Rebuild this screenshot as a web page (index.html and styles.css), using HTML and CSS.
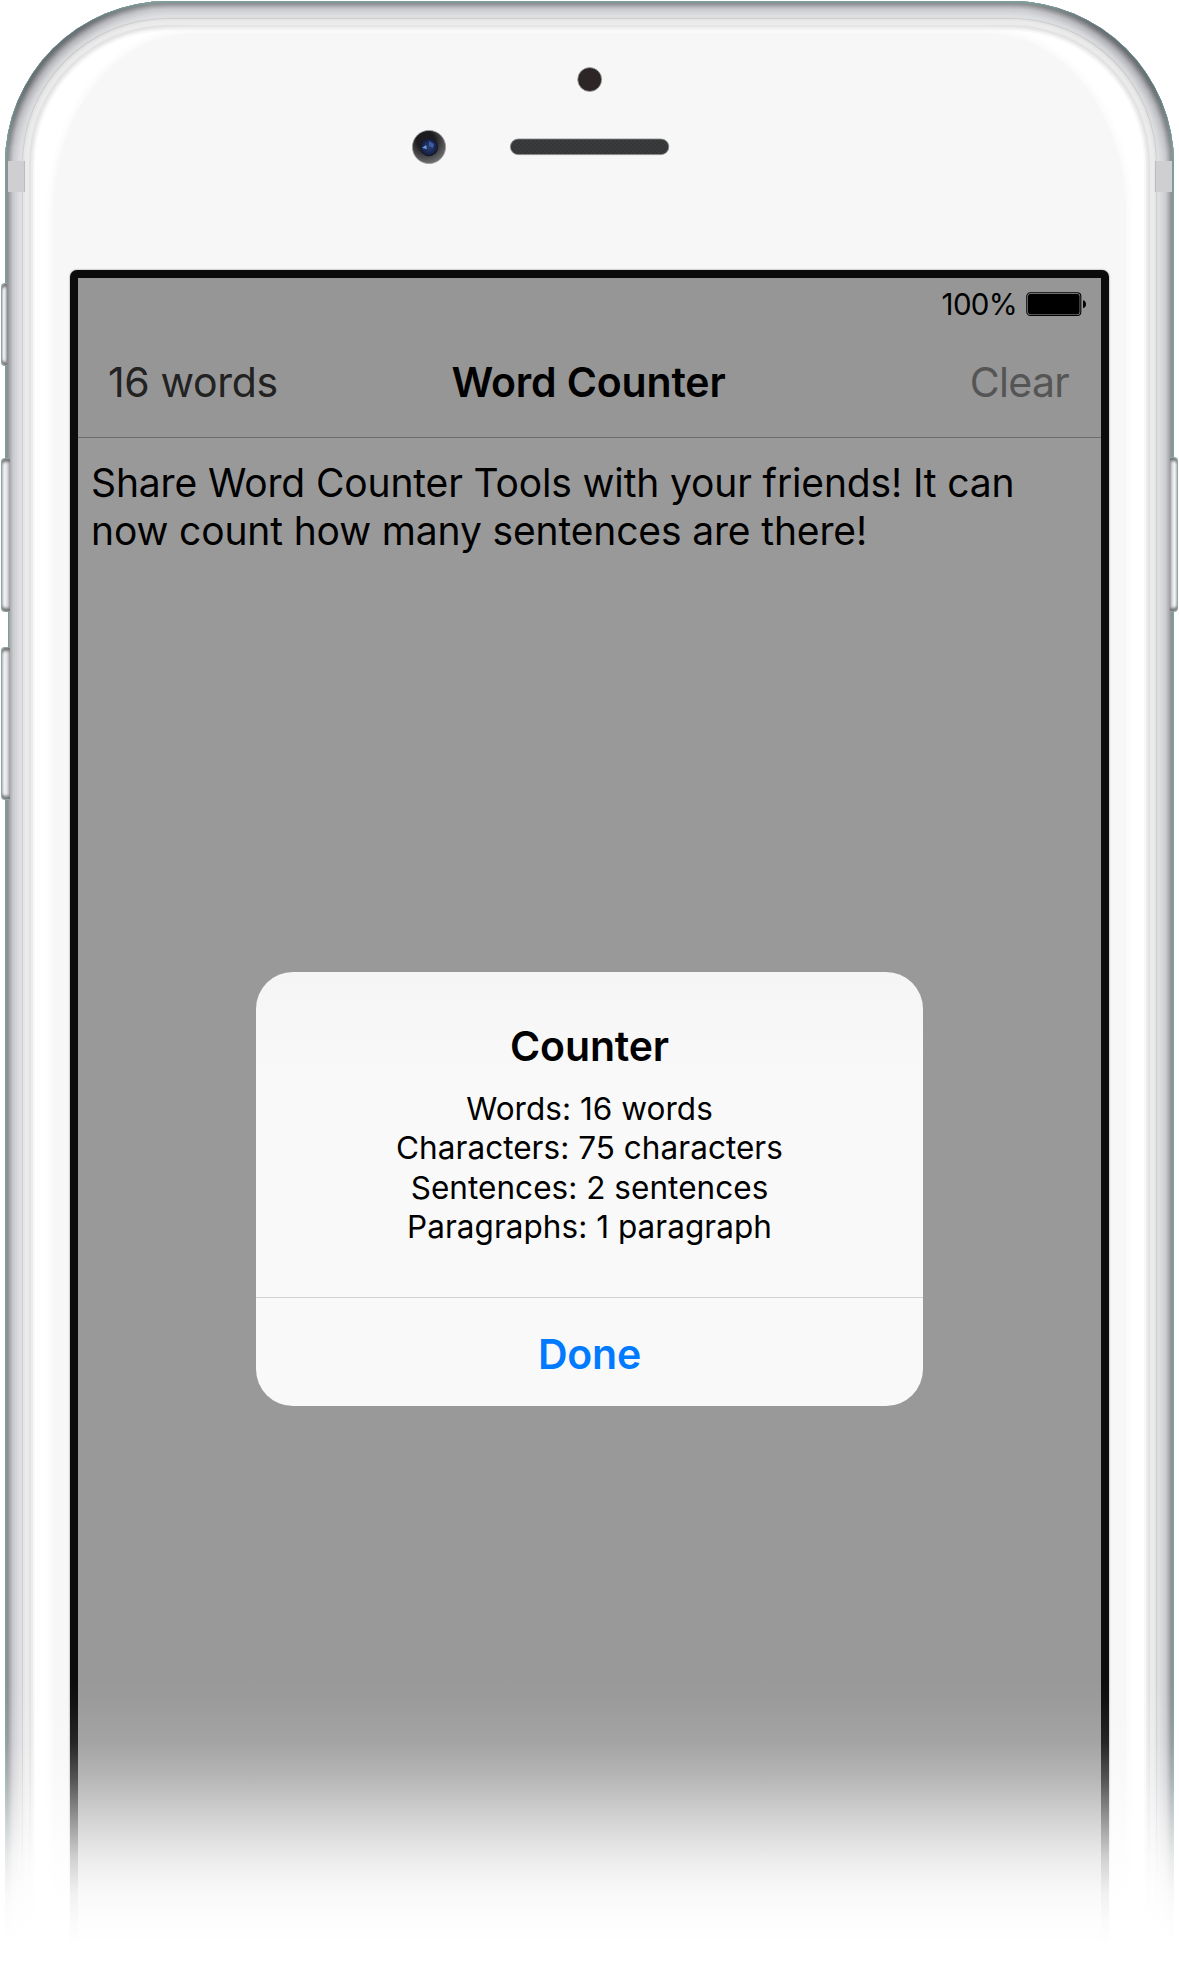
FILE: index.html
```html
<!DOCTYPE html>
<html lang="en">
<head>
<meta charset="utf-8">
<title>Word Counter</title>
<link rel="stylesheet" href="styles.css">
</head>
<body>
<main class="stage">
  <div class="phone">
    <i class="glass"></i>
    <i class="band band-left"></i>
    <i class="band band-right"></i>
    <svg class="sensors" viewBox="0 0 300 120" width="300" height="120" aria-hidden="true">
      <defs>
        <radialGradient id="ring" cx=".4" cy=".3" r=".75"><stop offset=".35" stop-color="#1c1c1e"/><stop offset="1" stop-color="#77787a"/></radialGradient>
        <radialGradient id="lens"><stop offset="0" stop-color="#27406f"/><stop offset=".6" stop-color="#1b2a59"/><stop offset="1" stop-color="#151722"/></radialGradient>
        <pattern id="mesh" width="4" height="4" patternUnits="userSpaceOnUse"><rect width="4" height="4" fill="#3a3b3d"/><circle cx="1" cy="1" r=".7" fill="#2b2b2d"/><circle cx="3" cy="3" r=".7" fill="#2b2b2d"/></pattern>
      </defs>
      <circle cx="199.7" cy="29.5" r="12" fill="#2d2627" stroke="#aaa" stroke-width=".8"/>
      <circle cx="39" cy="97" r="16.6" fill="url(#ring)" stroke="#999" stroke-width=".8"/>
      <circle cx="39" cy="97" r="9.2" fill="url(#lens)"/>
      <path d="M32 98l4-3 1 4z" fill="#6b9be0"/>
      <path d="M39 91l5 3-1 4-4-2z" fill="#3d5ca5"/>
      <rect x="120.4" y="89" width="158.4" height="15.6" rx="7.8" fill="url(#mesh)" stroke="#88898a" stroke-width=".8"/>
    </svg>
    <section class="screen">
      <div class="status">
        <span class="percent">100%</span>
        <svg width="61" height="25" viewBox="0 0 61 25" aria-hidden="true"><rect x=".8" y=".8" width="54" height="22.6" rx="3.5" fill="none" stroke="#000" stroke-width="1.1"/><rect x="2" y="2" width="51.6" height="20.2" rx="2.2"/><path d="M57 8.2c2.2.6 3 2.2 3 4s-.8 3.400-3 4z"/></svg>
      </div>
      <header class="nav">
        <span class="count">16 words</span>
        <h1 class="title">Word Counter</h1>
        <span class="clear">Clear</span>
      </header>
      <p class="text">Share Word Counter Tools with your friends! It can<br>now count how many sentences are there!</p>
      <section class="alert">
        <div class="alert-body">
          <h2 class="alert-title">Counter</h2>
          <p class="stats">Words: 16 words<br>Characters: 75 characters<br>Sentences: 2 sentences<br>Paragraphs: 1 paragraph</p>
        </div>
        <div class="done">Done</div>
      </section>
    </section>
  </div>
  <i class="notch"></i>
  <i class="key key-mute"></i>
  <i class="key key-up"></i>
  <i class="key key-down"></i>
  <i class="key key-power"></i>
  <div class="fade"></div>
</main>
</body>
</html>
```
FILE: styles.css
```css
* { box-sizing: border-box; }

body {
  margin: 0;
  background: #fff;
  font-family: Inter, "Liberation Sans", sans-serif;
  color: #000;
}

h1, h2, p { margin: 0; font-weight: 400; }

.stage {
  position: relative;
  width: 1179px;
  height: 1966px;
  padding: 1px 5px 0;
  overflow: hidden;
}

.phone {
  position: relative;
  height: 2200px;
  padding: 49px 65px 0;
  border-radius: 163px;
  background: #fff;
  box-shadow:
    inset 0 0 0 1.5px #7c9f9e,
    inset 0 0 0 3px #8b9294,
    inset 0 0 0 4px #97999b,
    inset 0 0 0 5px #a3a4a7,
    inset 0 0 0 6px #aeb0b3,
    inset 0 0 0 7px #b9babe,
    inset 0 0 0 8px #c3c4c8,
    inset 0 0 0 10px #cccdd1,
    inset 0 0 0 12px #d3d4d7,
    inset 0 0 0 14px #d9dadd,
    inset 0 0 0 17px #dedfe1,
    inset 0 0 0 18px #cfcfd0,
    inset 0 0 0 20px #e6e6e7,
    inset 0 0 0 24px #ebebeb,
    inset 0 0 0 26px #e2e2e2,
    inset 0 0 0 28px #ececec,
    inset 0 0 0 30px #f8f8f8;
}

/* Deeper shading on the curved metal of the two top corners */
.phone::before {
  content: "";
  position: absolute;
  inset: 0;
  border-radius: inherit;
  box-shadow: inset 0 0 16px 4px rgba(40, 40, 48, .5);
  -webkit-mask:
    radial-gradient(circle at 45px 50px, #000 40px, transparent 110px),
    radial-gradient(circle at calc(100% - 45px) 50px, #000 40px, transparent 110px);
  mask:
    radial-gradient(circle at 45px 50px, #000 40px, transparent 110px),
    radial-gradient(circle at calc(100% - 45px) 50px, #000 40px, transparent 110px);
}

.glass {
  position: absolute;
  inset: 32px 48px 0 48px;
  border-radius: 140px 140px 0 0 / 180px 180px 0 0;
  background: #f7f7f7;
  box-shadow: 0 0 8px 2px #f7f7f7;
}

.band {
  position: absolute;
  top: 160px;
  width: 17px;
  height: 31px;
  background: #cfcfd2;
}
.band-left { left: 3px; border-right: 1px solid #bbb; }
.band-right { right: 2px; border-left: 1px solid #bbb; }

.key {
  position: absolute;
  width: 9px;
  border: 1px solid #93a5a6;
  border-right: 0;
  border-radius: 4px 0 0 4px;
  background: linear-gradient(90deg, #b9c4c5, #f4f4f4 35%, #dcdcde 65%, #a2a3a5);
  box-shadow: inset 0 5px 3px -2px #777, inset 0 -5px 3px -2px #777;
}
.key-mute { left: 1px; top: 283px; width: 6px; height: 83px; }
.key-up { left: 1px; top: 458px; height: 154px; }
.key-down { left: 1px; top: 647px; height: 153px; }
.key-power { right: 1px; top: 457px; width: 8px; height: 155px; transform: scaleX(-1); }

.notch {
  position: absolute;
  left: 0;
  top: 609px;
  width: 9px;
  height: 41px;
  border-right: 1px solid #7c9f9e;
  background: #fff;
}

.sensors { position: relative; display: block; margin-left: 320px; }

.screen {
  position: relative;
  height: 1900px;
  margin-top: 99.500px;
  border: 8px solid #0c0c0c;
  border-radius: 7px;
  background: #999;
  box-shadow: 0 0 2px #777;
}

.status {
  display: flex;
  justify-content: flex-end;
  align-items: center;
  gap: 9px;
  height: 53px;
  padding-right: 14px;
  background: #969696;
}
.percent { font-size: 29.500px; letter-spacing: -.7px; }

.nav {
  display: grid;
  grid-template-columns: 1fr auto 1fr;
  align-items: center;
  height: 107px;
  padding: 0 32px 3px 30px;
  border-bottom: 1px solid #6d6d6d;
  background: #969696;
  font-size: 41px;
}
.title { font-size: 41px; font-weight: 600; letter-spacing: -.15px; }
.count { color: #222; justify-self: start; letter-spacing: -.35px; }
.clear { color: #555; justify-self: end; letter-spacing: -.7px; }

.text {
  padding: 21px 13px 0;
  font-size: 39px;
  line-height: 48.700px;
  letter-spacing: -.14px;
  white-space: nowrap;
}

.alert {
  position: absolute;
  left: 178px;
  top: 694px;
  width: 667px;
  height: 434px;
  border-radius: 37px;
  background: linear-gradient(#f5f5f5, #f9f9f9 25%);
  text-align: center;
}
.alert-body { height: 326px; padding-top: 49px; border-bottom: 1px solid #d2d2d4; }
.alert-title { font-size: 41px; font-weight: 600; line-height: 50px; letter-spacing: -.15px; }
.stats { margin-top: 18px; font-size: 31.500px; line-height: 39.500px; letter-spacing: .04px; }
.done { color: #007aff; font-size: 41px; font-weight: 600; line-height: 112px; letter-spacing: -.2px; }

.fade {
  position: absolute;
  inset: 1680px 0 0;
  background: linear-gradient(rgba(255,255,255,0) 0, rgba(255,255,255,.02) 20px, rgba(255,255,255,.11) 63px, rgba(255,255,255,.30) 100px, rgba(255,255,255,.44) 120px, rgba(255,255,255,.62) 147px, rgba(255,255,255,.82) 180px, rgba(255,255,255,.94) 213px, rgba(255,255,255,.98) 240px, #fff 265px);
}
```
